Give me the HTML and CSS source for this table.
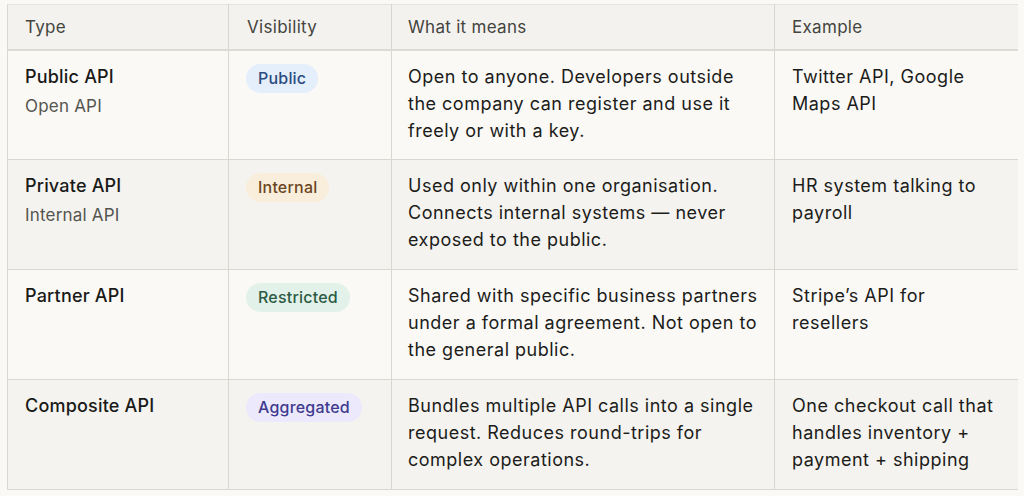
FILE: index.html
```html
<!DOCTYPE html>
<html>
<head>
<meta charset="utf-8">
<link rel="stylesheet" href="styles.css">
</head>
<body>
<table class="api-table">
  <colgroup>
    <col class="c-type"><col class="c-vis"><col class="c-mean"><col class="c-ex">
  </colgroup>
  <thead>
    <tr><th>Type</th><th class="h-vis">Visibility</th><th>What it means</th><th class="h-ex">Example</th></tr>
  </thead>
  <tbody>
    <tr class="odd">
      <td><div class="name">Public API</div><div class="alias">Open API</div></td>
      <td><span class="badge b-public">Public</span></td>
      <td class="mean">Open to anyone. Developers outside the company can register and use it freely or with a key.</td>
      <td class="ex">Twitter API, Google Maps API</td>
    </tr>
    <tr class="even">
      <td><div class="name">Private API</div><div class="alias">Internal API</div></td>
      <td><span class="badge b-internal">Internal</span></td>
      <td class="mean">Used only within one organisation. Connects internal systems — never exposed to the public.</td>
      <td class="ex">HR system talking to payroll</td>
    </tr>
    <tr class="odd">
      <td><div class="name">Partner API</div></td>
      <td><span class="badge b-restricted">Restricted</span></td>
      <td class="mean">Shared with specific business partners under a formal agreement. Not open to the general public.</td>
      <td class="ex">Stripe’s API for resellers</td>
    </tr>
    <tr class="even">
      <td><div class="name">Composite API</div></td>
      <td><span class="badge b-aggregated">Aggregated</span></td>
      <td class="mean">Bundles multiple API calls into a single request. Reduces round-trips for complex operations.</td>
      <td class="ex">One checkout call that handles inventory + payment + shipping</td>
    </tr>
  </tbody>
</table>
</body>
</html>
```
FILE: styles.css
```css
html, body {
  margin: 0;
  padding: 0;
  background: #faf9f6;
}
body {
  padding: 4px 0 0 7px;
  font-family: Inter, "Noto Sans", sans-serif;
  color: #1c1c1a;
}
.api-table {
  border-collapse: collapse;
  table-layout: fixed;
  width: 1010px;
  border-left: 1px solid #d8d7d2;
  border-top: 1px solid #e4e3df;
  border-bottom: 1px solid #d8d7d2;
}
.c-type { width: 221px; }
.c-vis { width: 163px; }
.c-mean { width: 383px; }
.c-ex { width: 243px; }
th {
  background: #f3f2ee;
  text-align: left;
  font-weight: 400;
  font-size: 17px;
  letter-spacing: 0.3px;
  color: #444440;
  height: 45px;
  padding: 0 17px 0 16px;
  box-sizing: border-box;
  border-bottom: 2px solid #dcdbd6;
  border-left: 1px solid #d8d7d2;
}
th:first-child { padding-left: 17px; }
th.h-vis { padding-left: 18px; }
th.h-ex { padding-left: 17px; }
td {
  vertical-align: top;
  font-size: 18px;
  line-height: 27px;
  letter-spacing: 0.5px;
  padding: 12px 17px 15px 17px;
  height: 110px;
  box-sizing: border-box;
  border-left: 1px solid #d8d7d2;
  border-bottom: 1px solid #d8d7d2;
  color: #1c1c1a;
}
td:first-child { padding-left: 17px; }
td.mean { padding-left: 16px; padding-right: 15px; }
td.ex { padding-left: 17px; padding-right: 21px; }
th:first-child, td:first-child { border-left: none; }
tr.odd td { background: #faf9f6; }
tr.even td { background: #f4f3ef; }
.name {
  font-weight: 500;
  letter-spacing: 0.2px;
  color: #1a1a18;
}
.alias {
  margin-top: 3px;
  font-size: 17px;
  letter-spacing: 0.2px;
  color: #55554f;
}
.badge {
  display: inline-block;
  margin-top: 1px;
  font-size: 16px;
  font-weight: 500;
  letter-spacing: 0.2px;
  line-height: 19px;
  padding: 5px 12px;
  border-radius: 15px;
}
.b-public { background: #e5eefb; color: #2a4b80; }
.b-internal { background: #f8eedb; color: #6c4522; }
.b-restricted { background: #e2f2eb; color: #2c5a44; }
.b-aggregated { background: #ebe9fb; color: #3f3a8e; }
```
